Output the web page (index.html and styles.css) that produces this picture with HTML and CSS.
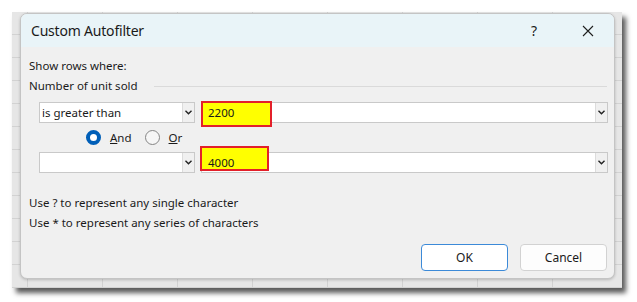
FILE: index.html
```html
<!DOCTYPE html>
<html>

<head>
  <meta charset='utf-8'>
  <title>Custom Autofilter</title>
  <meta name='viewport' content='width=device-width, initial-scale=1'>
  <link rel="stylesheet" href="styles.css">
</head>

<body>
  <div class="sheet">
    <div class="dialog">
      <header class="titlebar">
        <span class="title">Custom Autofilter</span>
        <span class="help">?</span>
        <svg class="close" width="12" height="12" viewBox="0 0 12 12">
          <path d="M1 1 L11 11 M11 1 L1 11" stroke="#1f1f1f" stroke-width="1.1" fill="none" />
        </svg>
      </header>

      <div class="body">
        <p class="line">Show rows where:</p>
        <div class="group-label">
          <span>Number of unit sold</span>
          <div class="rule"></div>
        </div>

        <div class="criteria first">
          <div class="combo op">
            <span class="combo-text">is greater than</span>
            <span class="drop"><svg width="7" height="5" viewBox="0 0 7 5"><path d="M0.5 0.8 L3.5 3.8 L6.5 0.8" stroke="#222" stroke-width="1.4" fill="none" /></svg></span>
          </div>
          <div class="combo value">
            <div class="mark mark-one"></div>
            <span class="combo-text">2200</span>
            <span class="drop"><svg width="7" height="5" viewBox="0 0 7 5"><path d="M0.5 0.8 L3.5 3.8 L6.5 0.8" stroke="#222" stroke-width="1.4" fill="none" /></svg></span>
          </div>
        </div>

        <div class="logic">
          <label class="radio"><span class="dot checked"></span><span><u>A</u>nd</span></label>
          <label class="radio"><span class="dot"></span><span><u>O</u>r</span></label>
        </div>

        <div class="criteria">
          <div class="combo op">
            <span class="combo-text"></span>
            <span class="drop"><svg width="7" height="5" viewBox="0 0 7 5"><path d="M0.5 0.8 L3.5 3.8 L6.5 0.8" stroke="#222" stroke-width="1.4" fill="none" /></svg></span>
          </div>
          <div class="combo value">
            <div class="mark mark-two"></div>
            <span class="combo-text">4000</span>
            <span class="drop"><svg width="7" height="5" viewBox="0 0 7 5"><path d="M0.5 0.8 L3.5 3.8 L6.5 0.8" stroke="#222" stroke-width="1.4" fill="none" /></svg></span>
          </div>
        </div>

        <p class="line hint">Use ? to represent any single character</p>
        <p class="line">Use * to represent any series of characters</p>

        <div class="buttons">
          <button class="btn primary">OK</button>
          <button class="btn">Cancel</button>
        </div>
      </div>
    </div>
  </div>
</body>

</html>
```

FILE: styles.css
```css
* {
  box-sizing: border-box;
  margin: 0;
  padding: 0;
}

body {
  background-color: #fff;
  padding: 12px;
  font-family: "Segoe UI", "Noto Sans", sans-serif;
  font-size: 11.5px;
  color: #1a1a1a;
}

/* spreadsheet behind the dialog */
.sheet {
  width: 610px;
  height: 276px;
  padding: 1px 7px 9px 8px;
  background-color: #e6e6e6;
  background-image:
    linear-gradient(to right, #d2d2d2 1px, transparent 1px),
    linear-gradient(to bottom, #d2d2d2 1px, transparent 1px);
  background-size: 75px 23px;
  background-position: 15px -1px;
  box-shadow: 4px 5px 5px rgba(0, 0, 0, 0.65);
}

.dialog {
  width: 595px;
  height: 266px;
  background: #f0f0f0;
  border: 1px solid #c4c4c4;
  border-radius: 7px;
  overflow: hidden;
  box-shadow: 0 1px 3px rgba(0, 0, 0, 0.2);
}

.titlebar {
  height: 33px;
  background: #e9f4f8;
  display: flex;
  align-items: center;
  padding-left: 10px;
}

.title {
  font-size: 14px;
  letter-spacing: -0.2px;
  flex: 1;
}

.help {
  font-size: 14px;
  width: 51px;
}

.close {
  margin-right: 20px;
}

.body {
  padding: 9px 6px 7px 8px;
}

.line {
  line-height: 20px;
}

.group-label {
  display: flex;
  align-items: center;
  line-height: 20px;
}

.group-label .rule {
  flex: 1;
  height: 1px;
  background: #dadada;
  margin-left: 16px;
  margin-right: 1px;
}

.criteria {
  display: flex;
  gap: 6px;
  padding-left: 10px;
}

.criteria.first {
  margin-top: 6px;
}

.combo {
  position: relative;
  height: 21px;
  background: #fff;
  border: 1px solid #c9c9c9;
  display: flex;
  align-items: center;
}

.combo.op {
  width: 156px;
}

.combo.value {
  width: 407px;
}

.combo-text {
  flex: 1;
  padding-left: 2px;
  position: relative;
  z-index: 1;
}

.combo.value .combo-text {
  padding-left: 6px;
}

.drop {
  width: 12px;
  height: 100%;
  background: #f0f0f0;
  border-left: 1px solid #dcdcdc;
  display: flex;
  align-items: center;
  justify-content: center;
}

/* highlight marks drawn over the value boxes */
.mark {
  position: absolute;
  background: #ffff00;
  border: 2px solid #e3202a;
}

.mark-one {
  left: -1px;
  top: -2px;
  width: 71px;
  height: 26px;
}

.mark-two {
  left: -2px;
  top: -7px;
  width: 69px;
  height: 25px;
}

.logic {
  height: 29px;
  display: flex;
  align-items: center;
  padding-left: 57px;
  gap: 13px;
}

.radio {
  display: flex;
  align-items: center;
  gap: 9px;
}

.dot {
  width: 15px;
  height: 15px;
  border-radius: 50%;
  border: 1px solid #858585;
  background: #f6f6f6;
}

.dot.checked {
  border: 4px solid #005fb8;
  background: #fff;
}

.hint {
  margin-top: 20px;
}

.buttons {
  display: flex;
  justify-content: flex-end;
  gap: 12px;
  margin-top: 11px;
  padding-right: 1px;
}

.btn {
  width: 87px;
  height: 27px;
  font-family: inherit;
  font-size: 12px;
  color: #1a1a1a;
  background: #fdfdfd;
  border: 1px solid #d2d2d2;
  border-radius: 4px;
}

.btn.primary {
  border-color: #3c8ad8;
  background: #fff;
}
```
